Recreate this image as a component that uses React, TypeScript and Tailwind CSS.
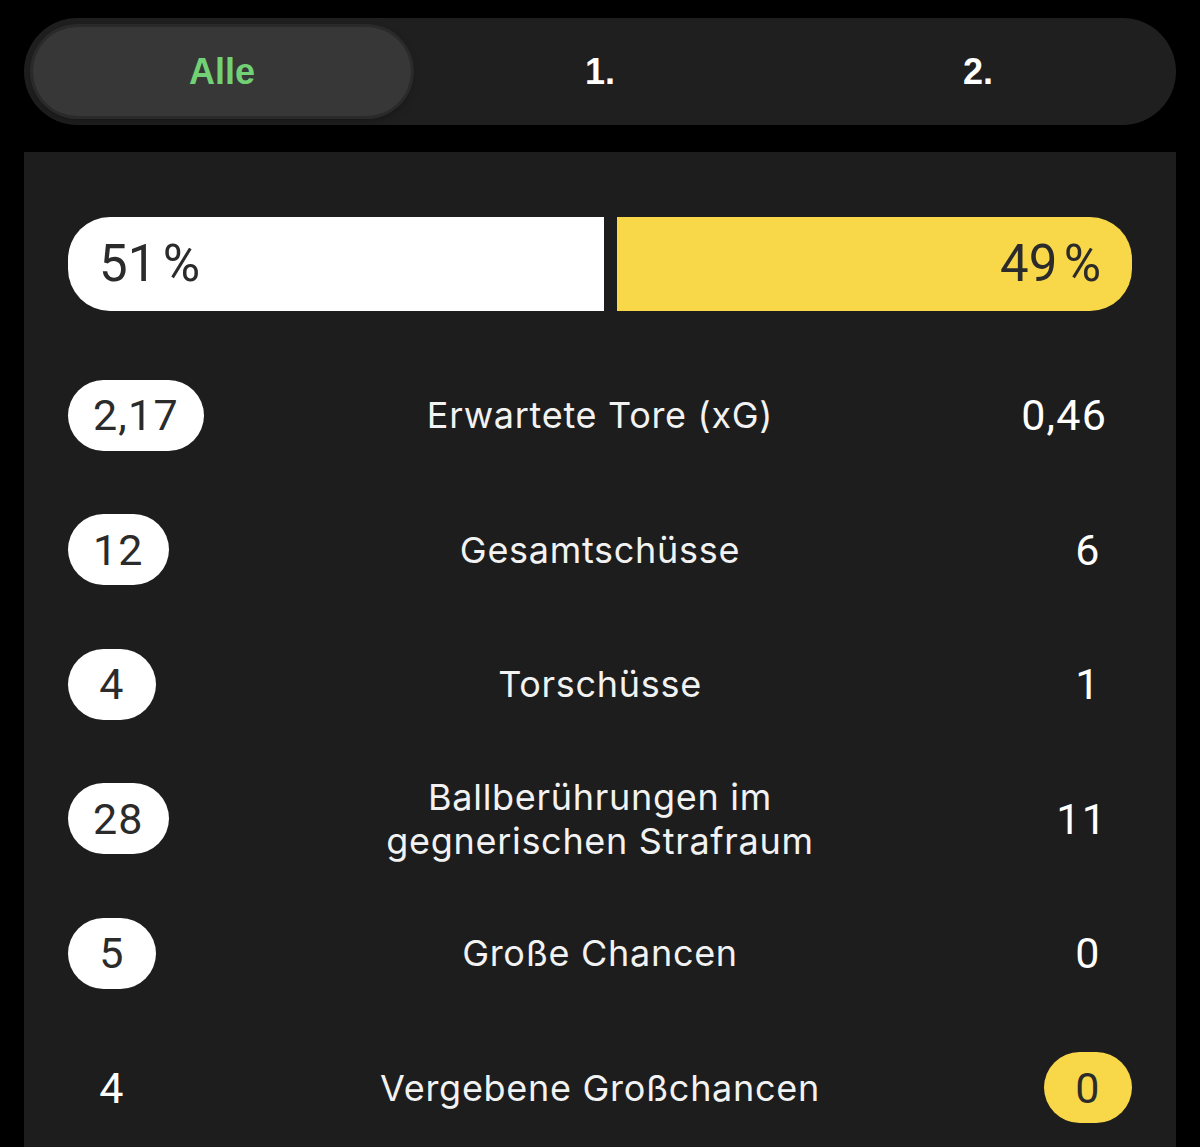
const stats = [
	{ label: ["Erwartete Tore (xG)"], home: "2,17", away: "0,46", win: "home" },
	{ label: ["Gesamtschüsse"], home: "12", away: "6", win: "home" },
	{ label: ["Torschüsse"], home: "4", away: "1", win: "home" },
	{ label: ["Ballberührungen im", "gegnerischen Strafraum"], home: "28", away: "11", win: "home" },
	{ label: ["Große Chancen"], home: "5", away: "0", win: "home" },
	{ label: ["Vergebene Großchancen"], home: "4", away: "0", win: "away" },
];

function Value({ value, tone }: { value: string; tone: "white" | "yellow" | "none" }) {
	const bg =
		tone === "white"
			? "bg-white text-[#2b2b2b]"
			: tone === "yellow"
				? "bg-[#f8d748] text-[#2b2b2b]"
				: "bg-transparent text-white";
	return (
		<div
			className={`h-[71px] min-w-[88px] px-[25px] rounded-full flex items-center justify-center text-[43px] tracking-[1.2px] font-['Roboto',sans-serif] ${bg}`}
		>
			{value}
		</div>
	);
}

export default function App() {
	return (
		<div className="min-h-screen bg-black pt-[18px] px-[24px] font-['Inter',sans-serif]">
			<div
				data-role="period-tabs"
				className="h-[107px] rounded-full bg-[#1f1f1f] p-[9px] grid grid-cols-3 font-['Liberation_Sans',Arial,sans-serif] font-bold text-[36px]"
			>
				<div className="rounded-full bg-[#373737] shadow-[0_0_0_3px_#2a2a2a,0_4px_10px_rgba(0,0,0,0.35)] flex items-center justify-center text-[#72d175]">
					Alle
				</div>
				<div className="flex items-center justify-center text-white">1.</div>
				<div className="flex items-center justify-center text-white">2.</div>
			</div>

			<div data-role="stats-card" className="mt-[27px] bg-[#1d1d1d] px-[44px] pt-[65px] pb-[20px]">
				<div data-name="possession" className="flex h-[94px] gap-[13px] text-[51px] text-[#2b2b2b] font-['Roboto',sans-serif]">
					<div className="w-[51%] bg-white rounded-l-[42px] flex items-center pl-[31px]">51{"\u202F"}%</div>
					<div className="w-[49%] bg-[#f8d748] rounded-r-[42px] flex items-center justify-end pr-[31px]">49{"\u202F"}%</div>
				</div>

				<div className="mt-[37px]">
					{stats.map((s) => (
						<div key={s.label.join(" ")} className="h-[134.5px] grid grid-cols-[220px_1fr_220px] items-center">
							<div className="flex justify-start">
								<Value value={s.home} tone={s.win === "home" ? "white" : "none"} />
							</div>
							<div className="text-center text-[#f2f2f2] text-[36px] leading-[44px] tracking-[0.7px]">
								{s.label.map((l) => (
									<div key={l}>{l}</div>
								))}
							</div>
							<div className="flex justify-end">
								<Value value={s.away} tone={s.win === "away" ? "yellow" : "none"} />
							</div>
						</div>
					))}
				</div>
			</div>
		</div>
	);
}
